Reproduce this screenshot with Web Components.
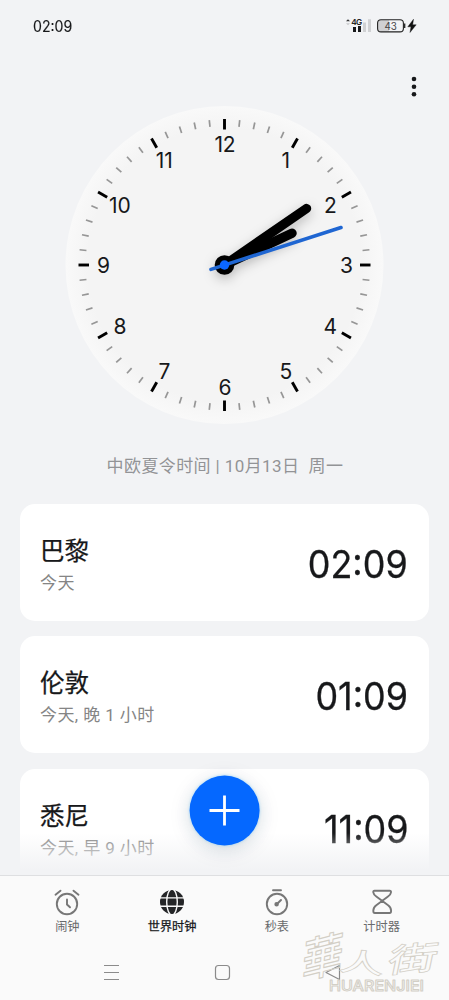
<!DOCTYPE html>
<html lang="zh-CN">
<head>
<meta charset="utf-8">
<meta name="viewport" content="width=device-width">
<title>世界时钟</title>
<style>
html,body{margin:0;height:100%;background:#f2f3f5}
body{font-family:Inter,"Noto Sans CJK SC",sans-serif;color:#17181a;overflow:hidden}
</style>
</head>
<body>
<clock-app></clock-app>
<script>
const define = (name, html, setup) => customElements.define(name, class extends HTMLElement {
  constructor() {
    super();
    const t = document.createElement('template');
    t.innerHTML = html;
    this.attachShadow({mode: 'open'}).append(t.content.cloneNode(true));
  }
  connectedCallback() { if (setup) setup(this, this.shadowRoot); }
});

define('status-bar', `
<style>
:host{display:flex;justify-content:space-between;align-items:flex-start;height:52px;box-sizing:border-box;padding:17px 31px 0 33px}
.time{font-size:15.200px;line-height:19px;transform:scaleX(.93);transform-origin:left;-webkit-text-stroke:.15px #17181a}
.time span{line-height:0;vertical-align:1px}
svg{display:block}
text{font-family:Inter,sans-serif}
</style>
<span class="time">02<span>:</span>09</span>
<svg width="73" height="18" viewBox="345 17 73 18">
  <path d="M346 21.300l2-2 2 2z" fill="#333"/><path d="M346 23.200l2 2 2-2z" fill="#c8c9cb"/>
  <text x="351.300" y="25" font-size="8.200" font-weight="600" letter-spacing="-.8" fill="#222">4G</text>
  <path d="M353 27h3v5h-3zM358 26h3v6h-3z" fill="#17181a"/>
  <path d="M363 22.500h3V32h-3zM368 19.300h3V32h-3z" fill="#d0d1d3"/>
  <path d="M380.500 20h8.500v11.500h-8.500a3 3 0 0 1-3-3v-5.500a3 3 0 0 1 3-3z" fill="#d0d0d2"/>
  <rect x="377.600" y="19.700" width="25.800" height="12.200" rx="3.400" fill="none" stroke="#222" stroke-width="1.100"/>
  <path d="M404.700 23.600v4.400" stroke="#222" stroke-width="1.300"/>
  <text x="390.700" y="29.500" font-size="9.800" text-anchor="middle" fill="#444">43</text>
  <path d="M413.500 19.200l-5.700 7.600h3.200l-1 5.700 6.200-7.700h-3.500z" fill="#111" stroke="#111" stroke-width=".4"/>
</svg>`);

define('more-button', `
<style>:host{display:flex;justify-content:flex-end;height:53px;padding-right:30px}svg{display:block;margin-top:22px}</style>
<svg width="10" height="26" viewBox="0 0 10 26"><g fill="#17181a"><circle cx="5" cy="5" r="2.300"/><circle cx="5" cy="12.700" r="2.300"/><circle cx="5" cy="20.300" r="2.300"/></g></svg>`);

define('analog-clock', `
<style>:host{display:flex;justify-content:center;height:320px}svg{display:block;overflow:visible}text{font-family:Inter,sans-serif;font-size:21px;letter-spacing:-.2px;fill:#17181a;text-anchor:middle}</style>
<svg width="321" height="320" viewBox="-160.500 -160 321 320">
  <defs>
    <radialGradient id="face"><stop offset=".86" stop-color="#f4f4f4"/><stop offset=".97" stop-color="#f8f8f8"/><stop offset="1" stop-color="#f9f9f9"/></radialGradient>
    <filter id="shadow" x="-60%" y="-60%" width="220%" height="240%"><feDropShadow dx="0" dy="4" stdDeviation="6" flood-color="#000" flood-opacity=".25"/></filter>
  </defs>
  <circle r="159" fill="url(#face)"/>
  <g id="dial"></g>
  <g filter="url(#shadow)" stroke="#000" stroke-linecap="round">
    <path d="M0 0L82-56.500" stroke-width="9.400"/><path d="M0 0L67.500-31.800" stroke-width="9.400"/><circle r="9.800" stroke="none"/>
  </g>
  <path d="M-13.500 4.400L116.500-37.500" stroke="#1f66d2" stroke-width="3.600" stroke-linecap="round"/>
  <circle r="4.700" fill="#0b66ff"/>
</svg>`, (host, root) => {
  let out = '';
  for (let i = 0; i < 60; i++) {
    const h = i % 5 === 0;
    out += `<path d="M0-${h ? 146 : 145.7}V-${h ? 135.5 : 138.8}" transform="rotate(${i * 6})" stroke="${h ? '#000' : '#969696'}" stroke-width="${h ? 2.9 : 1.7}"/>`;
  }
  for (let n = 1; n <= 12; n++) {
    const a = n * Math.PI / 6;
    out += `<text x="${(121.5 * Math.sin(a) + .5).toFixed(1)}" y="${(-121.5 * Math.cos(a) + 8.3).toFixed(1)}">${n}</text>`;
  }
  root.getElementById('dial').innerHTML = out;
});

define('zone-label', `
<style>:host{display:flex;flex:none;justify-content:center;align-items:flex-start;height:79px;box-sizing:border-box;padding:29px 0 0 1px;color:#929396}
span{font-family:Roboto,"Noto Sans CJK SC",sans-serif;font-size:17px;line-height:24px;height:24px;white-space:nowrap;font-weight:400;letter-spacing:.4px}</style><span><slot></slot></span>`);

define('city-card', `
<style>
:host{display:flex;justify-content:space-between;height:117px;box-sizing:border-box;padding:0 21px 0 20px;background:#fff;border-radius:15px}
.place{display:flex;flex-direction:column;padding-top:29px}
.name{font-size:24.500px;line-height:36px;font-weight:400;-webkit-text-stroke:.25px #17181a}
.sub{font-family:Roboto,"Noto Sans CJK SC",sans-serif;font-size:17px;line-height:24px;margin-top:2px;color:#858585;font-weight:400;white-space:pre;letter-spacing:.4px}
.time{font-size:38px;line-height:46px;padding-top:37px;font-weight:400;-webkit-text-stroke:.3px #17181a;transform:scaleX(.945);transform-origin:right}
</style>
<div class="place"><span class="name"><slot name="name"></slot></span><span class="sub"><slot name="sub"></slot></span></div>
<div class="time"><slot name="time"></slot></div>`);

define('add-button', `
<style>:host{display:block;width:71px;height:71px}svg{display:block;overflow:visible;filter:drop-shadow(0 4px 10px rgba(0,0,0,.12)) drop-shadow(0 0 1.500px rgba(80,190,255,.5))}</style>
<svg width="71" height="71" viewBox="0 0 71 71"><circle cx="35.600" cy="35.500" r="35" fill="#0568ff"/><path d="M35.500 20.500v30M20.500 35.500h30" stroke="#fff" stroke-width="2.800"/></svg>`);

const icons = {
  alarm: '<circle cx="14" cy="16" r="10.200"/><path d="M14 11.500v5l3 2.800" stroke-width="1.900"/><path d="M2.500 6.700l5-4M25.500 6.700l-5-4"/>',
  globe: '<circle cx="14" cy="14" r="12" fill="#242527" stroke="none"/><g stroke="#fafafa" stroke-width="1.400"><ellipse cx="14" cy="14" rx="5.300" ry="13"/><path d="M1 9.900h26M1 18.300h26"/></g>',
  stop: '<path d="M10 2.200h8"/><circle cx="14" cy="16" r="10.200"/><path d="M14 16l4-4" stroke-width="2"/><circle cx="13.600" cy="16.300" r="1.300" fill="#777"/>',
  glass: '<path d="M6.500 2.800h15.200q1.500 0 1.300 1.500-.4 2.500-3 4.200L8.300 17.300q-3 2.200-3 5.400 0 2.300 1.500 2.300h14.800q1.500 0 1.500-2.300 0-3.200-3-5.400L8.300 8.500q-2.600-1.700-3-4.200-.2-1.500 1.200-1.500z" stroke-linejoin="round"/>'
};
define('nav-item', `
<style>
:host{display:flex;flex-direction:column;align-items:center;flex:1;color:#696a6c;font-size:12.200px;line-height:18px;padding-top:12px}
:host([active]){color:#17181a;-webkit-text-stroke:.25px #17181a}
svg{display:block;fill:none;stroke:#777;stroke-width:1.900;stroke-linecap:round;margin-bottom:2px}
</style><svg width="28" height="28" viewBox="0 0 28 28"></svg><slot></slot>`, (host, root) => {
  root.querySelector('svg').innerHTML = icons[host.getAttribute('icon')];
});

define('system-nav', `
<style>:host{display:block}svg{display:block}</style>
<svg width="449" height="54" viewBox="0 946 449 54" fill="none" stroke="#8b8b8b" stroke-width="1.200">
  <path d="M104 965.500h15M104 972.500h15M104 979.500h15"/>
  <rect x="215.500" y="965.500" width="14" height="14" rx="3"/>
  <path d="M339.500 965.500v14L326 972.500z" stroke-linejoin="round"/>
</svg>`);

define('site-mark', `
<style>
:host{display:block}svg{display:block;overflow:visible}
text{fill:none;stroke:#d3cfc6;stroke-width:1;stroke-linejoin:round}
.han{font-family:"Noto Sans CJK TC",sans-serif;font-weight:500}
.latin{font-family:Inter,sans-serif;font-weight:500;font-size:15px}
</style>
<svg width="149" height="65" viewBox="0 0 149 65">
  <g class="han"><text transform="matrix(1.050 -.26 -.1 1.200 3 47)" font-size="39">華</text><text transform="matrix(1.050 .1 -.1 .6 40 38)" font-size="43">人</text><text transform="matrix(1.080 -.1 -.15 .720 88 41)" font-size="46">街</text></g>
  <text class="latin" x="31" y="58.500" textLength="95" lengthAdjust="spacingAndGlyphs">HUARENJIEI</text>
</svg>`);

define('clock-app', `
<style>
:host{display:flex;flex-direction:column;width:449px;height:1000px;position:relative;overflow:hidden;background:#f2f3f5}
.list{flex:none;height:371px;overflow:hidden;position:relative;display:flex;flex-direction:column;gap:15.300px;padding:0 20px;box-sizing:border-box}
city-card{flex:none}
.colon{line-height:0;vertical-align:3.500px}
.list::after{content:"";position:absolute;left:0;right:0;bottom:0;height:42px;background:linear-gradient(rgba(242,243,245,0),#f2f3f5 88%)}
add-button{position:absolute;left:189px;top:775px}
.foot{flex:1;background:#fafafa;border-top:1px solid #dedfe1}
nav{display:flex;padding:0 15px;height:70px}
site-mark{position:absolute;left:298px;top:932px}
</style>
<status-bar></status-bar>
<more-button></more-button>
<analog-clock></analog-clock>
<zone-label>中欧夏令时间 | 10月13日&nbsp; 周一</zone-label>
<div class="list">
  <city-card><span slot="name">巴黎</span><span slot="sub">今天</span><span slot="time">02<span class="colon">:</span>09</span></city-card>
  <city-card><span slot="name">伦敦</span><span slot="sub">今天, 晚 1 小时</span><span slot="time">01<span class="colon">:</span>09</span></city-card>
  <city-card><span slot="name">悉尼</span><span slot="sub">今天, 早 9 小时</span><span slot="time">11<span class="colon">:</span>09</span></city-card>
</div>
<div class="foot">
  <nav><nav-item icon="alarm">闹钟</nav-item><nav-item icon="globe" active>世界时钟</nav-item><nav-item icon="stop">秒表</nav-item><nav-item icon="glass">计时器</nav-item></nav>
  <system-nav></system-nav>
</div>
<add-button></add-button>
<site-mark></site-mark>`);
</script>
</body>
</html>
